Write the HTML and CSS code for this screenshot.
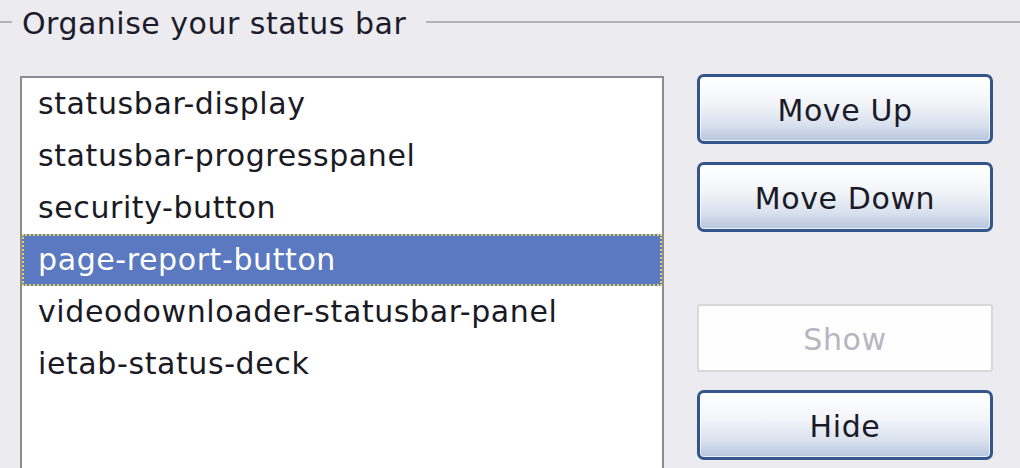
FILE: index.html
```html
<!DOCTYPE html>
<html>
<head>
<meta charset="utf-8">
<link rel="stylesheet" href="styles.css">
</head>
<body>
<div class="group">
  <div class="group-head">
    <span class="rule rule-short"></span>
    <span class="legend">Organise your status bar</span>
    <span class="rule rule-long"></span>
  </div>
  <div class="group-body">
    <ul class="listbox">
      <li class="item">statusbar-display</li>
      <li class="item">statusbar-progresspanel</li>
      <li class="item">security-button</li>
      <li class="item selected">page-report-button</li>
      <li class="item">videodownloader-statusbar-panel</li>
      <li class="item">ietab-status-deck</li>
    </ul>
    <div class="buttons">
      <button class="btn btn-up">Move Up</button>
      <button class="btn btn-down">Move Down</button>
      <button class="btn btn-show" disabled>Show</button>
      <button class="btn btn-hide">Hide</button>
    </div>
  </div>
</div>
</body>
</html>
```
FILE: styles.css
```css
html, body {
  margin: 0;
  padding: 0;
  background: #ecebef;
  overflow: hidden;
}
body {
  width: 1020px;
  height: 468px;
  font-family: "DejaVu Sans", Verdana, sans-serif;
  color: #1b1b22;
}
.group-head {
  display: flex;
  align-items: center;
  height: 48px;
}
.rule {
  height: 2px;
  background: #b4b3bb;
  margin-top: -4px;
}
.rule-short { width: 12px; }
.rule-long { flex: 1; }
.legend {
  font-size: 30px;
  letter-spacing: 0.5px;
  padding: 0 20px 0 10px;
  line-height: 50px;
  color: #1c1c2c;
}
.group-body {
  display: flex;
  padding-top: 28px;
  padding-left: 20px;
}
.listbox {
  list-style: none;
  margin: 0;
  padding: 0;
  width: 640px;
  height: 390px;
  background: #ffffff;
  border: 2px solid #8d8c93;
  border-bottom: none;
}
.item {
  height: 52px;
  line-height: 52px;
  padding-left: 16px;
  font-size: 30px;
  letter-spacing: 0.6px;
  color: #1a1a24;
  white-space: nowrap;
}
.item.selected {
  background: #5a79c0;
  color: #ffffff;
  outline: 2px dotted #e6d45a;
  outline-offset: -2px;
}
.buttons {
  display: flex;
  flex-direction: column;
  margin-left: 33px;
  margin-top: -2px;
}
.btn {
  width: 296px;
  height: 70px;
  font-family: "DejaVu Sans", Verdana, sans-serif;
  font-size: 30px;
  letter-spacing: 0.6px;
  color: #1b1b28;
  border: 3px solid #34548c;
  border-radius: 7px;
  background: linear-gradient(to bottom, #ffffff 0%, #f3f5f9 40%, #d9e1ee 75%, #b5c4dc 100%);
  box-shadow: inset 0 0 0 1px rgba(255,255,255,0.7);
  padding: 2px 0 0 0;
}
.btn-down { margin-top: 18px; }
.btn-show {
  margin-top: 72px;
  height: 68px;
  background: #fefefe;
  border: 2px solid #d8d7dc;
  border-radius: 3px;
  color: #b7b5bf;
  box-shadow: none;
}
.btn-hide { margin-top: 18px; }
```
